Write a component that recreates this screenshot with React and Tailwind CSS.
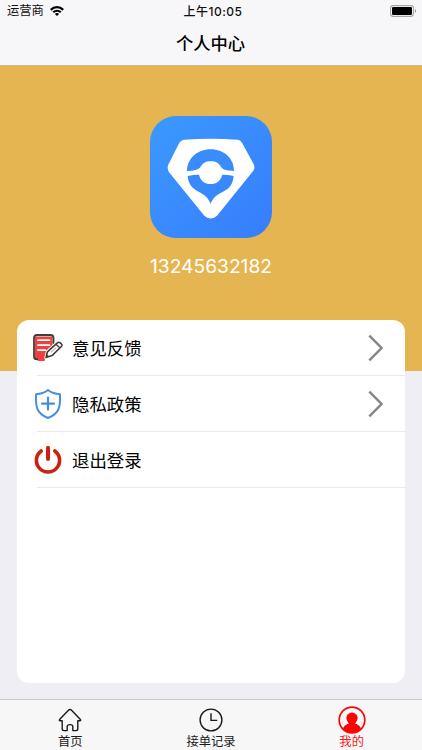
import React from "react";

const strokeProps = {
  fill: "none",
  strokeLinecap: "round",
  strokeLinejoin: "round",
};

function WifiIcon() {
  return (
    <svg width="14" height="10" viewBox="0 0 14 10" fill="none" stroke="#000" strokeWidth="2.2">
      <path d="M0.8 3.9C4.4 0.3 9.6 0.3 13.2 3.9" />
      <path d="M3.2 6.3C5.4 4.2 8.6 4.2 10.8 6.3" />
      <path d="M7 10L4.9 7.9C6.1 6.8 7.9 6.8 9.1 7.9Z" fill="#000" stroke="none" />
    </svg>
  );
}

function BatteryIcon() {
  return (
    <svg width="27" height="12" viewBox="0 0 27 12">
      <rect x="0.6" y="0.6" width="22.8" height="10.8" rx="2.6" fill="#fff" stroke="#a5a5a7" strokeWidth="1.1" />
      <rect x="2" y="2" width="20" height="8" rx="1.2" fill="#000" />
      <path d="M24.8 4C26.6 4.6 26.6 7.4 24.8 8Z" fill="#a0a0a2" />
    </svg>
  );
}

function Logo() {
  return (
    <svg width="122" height="122" viewBox="30 34 366 366">
      <defs>
        <linearGradient id="logoBg" x1="0" y1="0" x2="1" y2="1">
          <stop offset="0" stopColor="#3b99fe" />
          <stop offset="1" stopColor="#377dfd" />
        </linearGradient>
      </defs>
      <rect x="30" y="34" width="366" height="366" rx="78" fill="url(#logoBg)" />
      <path
        d="M132 105Q213 99 294 105Q302 106 306 114L342 180Q346 189 340 198L231 333Q212 350 193 333L86 201Q80 192 84 182L118 114Q123 106 132 105Z"
        fill="#fff"
      />
      <path
        d="M141 199C142 160 173 134 212 134C251 134 282 160 282 199C264 198 250 197 243 187C237 176 229 170 212 170C196 170 188 176 182 186C175 196 160 198 141 199Z"
        fill="#388cfe"
      />
      <path
        d="M143 214Q160 210 177 210C181 228 194 238 212 238C230 238 242 228 247 210Q264 210 281 214C279 239 267 253 249 261C229 270 217 281 212 298C206 281 195 270 176 261C157 252 145 239 143 214Z"
        fill="#3889fe"
      />
    </svg>
  );
}

function FeedbackIcon() {
  return (
    <svg width="32" height="30" viewBox="0 0 32 30" {...strokeProps}>
      <path d="M3 3.5H20.5V14L14 22L12.5 28H6L3 25Z" fill="#ee403e" />
      <path d="M5.2 26.2H4.5Q2 26.2 2 23.5V4.8Q2 2 5 2H18.5Q21.5 2 21.5 5V10" stroke="#443b3b" strokeWidth="1.8" />
      <path d="M6 7.2H17.5M6 12.2H17.5M6 17.2H13.5" stroke="#fff" strokeWidth="1.8" />
      <path
        d="M14 24.6L15.4 18.8L25.4 9.8Q26.6 8.8 27.8 9.7L29.6 11.2Q30.6 12.2 29.6 13.3L20 22.6Z"
        fill="#fff"
        stroke="#fff"
        strokeWidth="3.4"
      />
      <path
        d="M14 24.6L15.4 18.8L25.4 9.8Q26.6 8.8 27.8 9.7L29.6 11.2Q30.6 12.2 29.6 13.3L20 22.6Z"
        fill="#fff"
        stroke="#443b3b"
        strokeWidth="1.6"
      />
      <path d="M24 11.2L27.8 14.8" stroke="#443b3b" strokeWidth="1.3" />
      <path d="M24 14.8L19.4 18.9" stroke="#8b8585" strokeWidth="0.9" />
      <path d="M14 24.6L14.9 21.4L17.4 23.6Z" fill="#443b3b" />
    </svg>
  );
}

function ShieldIcon() {
  return (
    <svg width="28" height="32" viewBox="0 0 28 32" stroke="#4a8ddd" {...strokeProps}>
      <path
        d="M14 2C17.5 4.8 21.5 6 26 6.2C26.3 17 26.6 25 14 30C1.4 25 1.7 17 2 6.2C6.5 6 10.5 4.8 14 2Z"
        strokeWidth="2"
      />
      <path d="M14 9.6V21.6M8 15.6H20" strokeWidth="2.2" />
    </svg>
  );
}

function PowerIcon() {
  return (
    <svg width="28" height="30" viewBox="0 0 28 30" stroke="#cc2110" {...strokeProps}>
      <path d="M7.2 6A11.6 11.6 0 1 0 20.8 6" strokeWidth="3.6" />
      <path d="M14 2.7V14" strokeWidth="4" />
    </svg>
  );
}

function Chevron() {
  return (
    <svg width="16" height="28" viewBox="0 0 16 28" fill="none" stroke="#858585" strokeWidth="2.4">
      <path d="M1.3 1.6L13.6 14L1.3 26.4" />
    </svg>
  );
}

function HomeIcon() {
  return (
    <svg width="24" height="24" viewBox="0 0 24 24" stroke="#1a1a1a" strokeWidth="1.4" {...strokeProps}>
      <path d="M4.2 12.8H2.2Q0.8 12.8 1.6 11.6L10.2 2.4Q12 0.6 13.8 2.4L22.4 11.6Q23.2 12.8 21.8 12.8H19.8V20.8Q19.8 22.6 18 22.6H14.8V18.5Q14.8 16.6 12 16.6Q9.2 16.6 9.2 18.5V22.6H6Q4.2 22.6 4.2 20.8Z" />
    </svg>
  );
}

function ClockIcon() {
  return (
    <svg width="24" height="24" viewBox="0 0 24 24" fill="none" stroke="#1a1a1a" strokeWidth="1.4">
      <circle cx="12" cy="12" r="10.9" />
      <path d="M12 5.3V12.4H18.2" />
    </svg>
  );
}

function UserIcon() {
  return (
    <svg width="28" height="28" viewBox="0 0 28 28">
      <circle cx="14" cy="14" r="12.8" fill="none" stroke="#f80606" strokeWidth="1.7" />
      <circle cx="14" cy="12.2" r="5.6" fill="#f80606" />
      <path d="M5 22.4C6 19.2 9.5 18.3 12 16.5H16C18.5 18.3 22 19.2 23 22.4C18.5 28.4 9.5 28.4 5 22.4Z" fill="#f80606" />
    </svg>
  );
}

const menu = [
  { label: "意见反馈", icon: <FeedbackIcon />, arrow: true },
  { label: "隐私政策", icon: <ShieldIcon />, arrow: true },
  { label: "退出登录", icon: <PowerIcon />, arrow: false },
];

const tabs = [
  { label: "首页", icon: <HomeIcon /> },
  { label: "接单记录", icon: <ClockIcon /> },
  { label: "我的", icon: <UserIcon />, active: true },
];

function MenuRow({ label, icon, arrow }) {
  return (
    <div className="relative flex h-14 items-center pr-[21px] pl-[15px]">
      <div className="flex w-8 justify-center">{icon}</div>
      <span className="ml-2 flex-1 pt-0.5 text-[17.4px] leading-6 text-black">{label}</span>
      {arrow && <Chevron />}
      <div className="absolute right-0 bottom-0 left-5 h-px bg-[#e9e9ec]" />
    </div>
  );
}

function App() {
  return (
    <div className="flex h-[750px] w-[422px] flex-col overflow-hidden bg-[#efeef5] font-['Inter','Noto_Sans_CJK_SC',sans-serif]">
      <header className="h-[66px] shrink-0 border-b border-[#c9b78d] bg-[#f7f7f9]">
        <div className="grid h-[22px] grid-cols-3 items-center pr-[5px] pl-[7px] text-xs text-[#111]">
          <div className="flex items-center gap-1.5">
            <span className="pt-px text-[12.3px]">运营商</span>
            <WifiIcon />
          </div>
          <span className="pt-px pl-0.5 text-center font-medium tracking-[0.5px]">上午10:05</span>
          <div className="flex justify-end">
            <BatteryIcon />
          </div>
        </div>
        <h1 className="pr-px text-center text-[17.3px] leading-[43px] font-medium text-black">个人中心</h1>
      </header>

      <section className="flex h-[305px] shrink-0 flex-col items-center bg-[#e5b551] pt-[50.4px]">
        <Logo />
        <p className="mt-[14px] text-[19.2px] leading-7 text-white">13245632182</p>
      </section>

      <main className="-mt-[51px] mr-[17px] mb-4 ml-[17px] flex-1 rounded-xl bg-white">
        {menu.map((item) => (
          <MenuRow key={item.label} {...item} />
        ))}
      </main>

      <nav className="grid h-[51px] shrink-0 grid-cols-3 border-t border-[#c9c9ce] bg-[#f7f7f8]">
        {tabs.map((tab) => (
          <div
            key={tab.label}
            className={`flex flex-col items-center text-xs leading-4 ${tab.active ? "text-[#f02020]" : "text-[#1a1a1a]"}`}
          >
            <div className="flex h-[34px] items-center pt-[5px]">{tab.icon}</div>
            <span className="text-[12.3px]">{tab.label}</span>
          </div>
        ))}
      </nav>
    </div>
  );
}

export default App;
